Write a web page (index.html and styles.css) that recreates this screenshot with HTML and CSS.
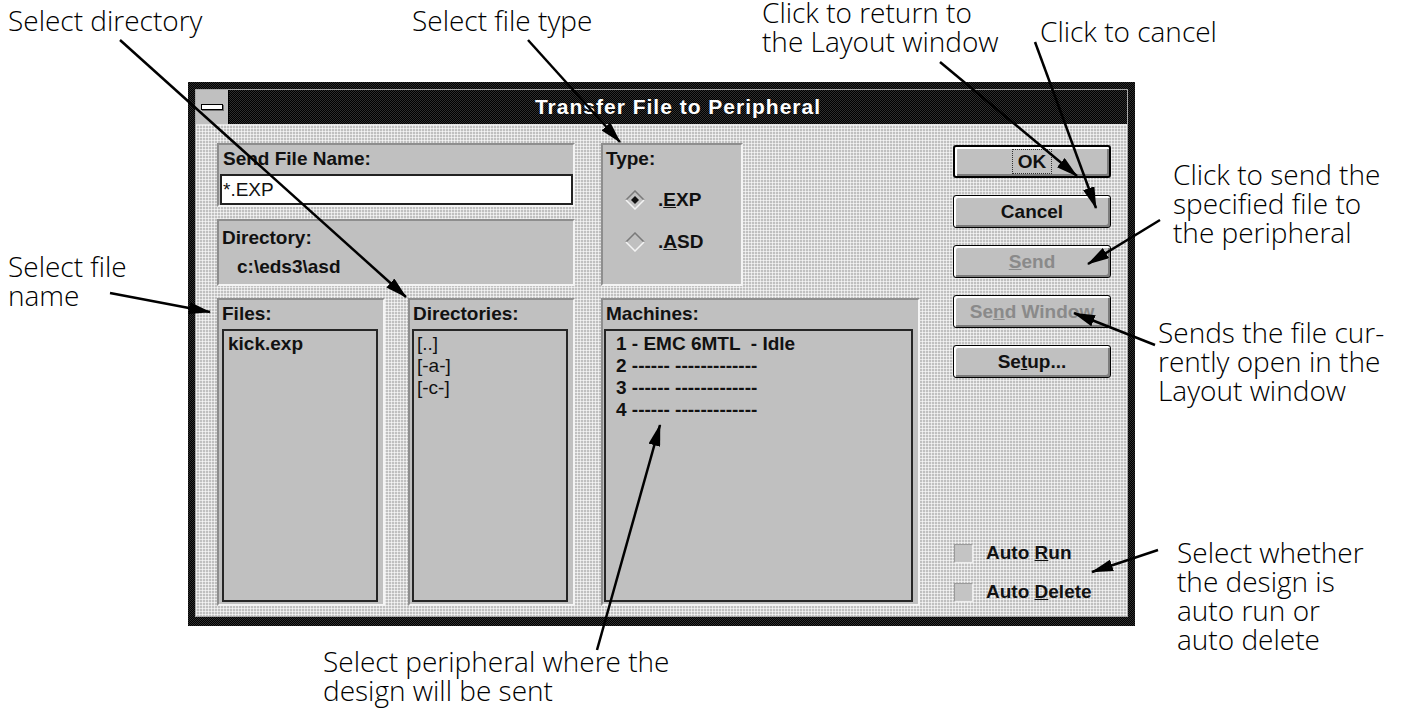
FILE: index.html
```html
<!DOCTYPE html>
<html lang="en">
<head>
    <meta charset="UTF-8">
    <meta name="viewport" content="width=device-width, initial-scale=1.0">
    <title>Transfer File to Peripheral</title>
    <link rel="stylesheet" href="styles.css">
</head>
<body>
<div class="page">

    <div class="window">
        <div class="inner">
            <div class="titlebar">
                <div class="sysbox"><span class="sysbar"></span></div>
                <div class="title">Transfer File to Peripheral</div>
            </div>

            <div class="client">
                <div class="main">
                    <div class="top">
                        <div class="left-col">
                            <div class="group group-name">
                                <div class="label">Send File Name:</div>
                                <div class="input">*.EXP</div>
                            </div>
                            <div class="group group-dir">
                                <div class="label">Directory:</div>
                                <div class="dir-path">c:\eds3\asd</div>
                            </div>
                        </div>
                        <div class="group group-type">
                            <div class="label">Type:</div>
                            <div class="radio radio-first">
                                <svg width="20" height="20" viewBox="0 0 20 20">
                                    <path d="M10 1 L19 10 L10 19 L1 10 Z" fill="#c0c0c0"/>
                                    <path d="M1 10 L10 1 L19 10" fill="none" stroke="#7a7a7a" stroke-width="1.5"/>
                                    <path d="M1 10 L10 19 L19 10" fill="none" stroke="#f4f4f4" stroke-width="1.5"/>
                                    <path d="M10 6 L14 10 L10 14 L6 10 Z" fill="#111"/>
                                </svg>
                                <span>.<u>E</u>XP</span>
                            </div>
                            <div class="radio">
                                <svg width="20" height="20" viewBox="0 0 20 20">
                                    <path d="M10 1 L19 10 L10 19 L1 10 Z" fill="#c0c0c0"/>
                                    <path d="M1 10 L10 1 L19 10" fill="none" stroke="#7a7a7a" stroke-width="1.5"/>
                                    <path d="M1 10 L10 19 L19 10" fill="none" stroke="#f4f4f4" stroke-width="1.5"/>
                                </svg>
                                <span>.<u>A</u>SD</span>
                            </div>
                        </div>
                    </div>

                    <div class="lists">
                        <div class="group group-list group-files">
                            <div class="label">Files:</div>
                            <div class="listbox list-files">
                                <div class="item">kick.exp</div>
                            </div>
                        </div>
                        <div class="group group-list group-dirs">
                            <div class="label">Directories:</div>
                            <div class="listbox list-dirs">
                                <div class="item">[..]</div>
                                <div class="item">[-a-]</div>
                                <div class="item">[-c-]</div>
                            </div>
                        </div>
                        <div class="group group-list group-machines">
                            <div class="label">Machines:</div>
                            <div class="listbox list-machines">
                                <div class="item">1 - EMC 6MTL  - Idle</div>
                                <div class="item">2 ------ -------------</div>
                                <div class="item">3 ------ -------------</div>
                                <div class="item">4 ------ -------------</div>
                            </div>
                        </div>
                    </div>
                </div>

                <div class="buttons">
                    <div class="btn btn-default"><span class="focus">OK</span></div>
                    <div class="btn">Cancel</div>
                    <div class="btn btn-off"><u>S</u>end</div>
                    <div class="btn btn-off">Se<u>n</u>d Window</div>
                    <div class="btn">Se<u>t</u>up...</div>

                    <div class="checks">
                        <div class="check"><span class="check-box"></span><span>Auto <u>R</u>un</span></div>
                        <div class="check"><span class="check-box"></span><span>Auto <u>D</u>elete</span></div>
                    </div>
                </div>
            </div>
        </div>
    </div>

    <!-- callouts round the dialog -->
    <div class="note note-dir">Select directory</div>
    <div class="note note-type">Select file type</div>
    <div class="note note-ok">Click to return to<br>the Layout window</div>
    <div class="note note-cancel">Click to cancel</div>
    <div class="note note-send">Click to send the<br>specified file to<br>the peripheral</div>
    <div class="note note-window">Sends the file cur-<br>rently open in the<br>Layout window</div>
    <div class="note note-auto">Select whether<br>the design is<br>auto run or<br>auto delete</div>
    <div class="note note-file">Select file<br>name</div>
    <div class="note note-machine">Select peripheral where the<br>design will be sent</div>

    <svg class="arrows" width="1409" height="712" viewBox="0 0 1409 712">
        <defs>
            <marker id="head" markerUnits="userSpaceOnUse" markerWidth="22" markerHeight="12" refX="21" refY="6" orient="auto">
                <path d="M0 0 L22 6 L0 12 Z" fill="#000"/>
            </marker>
        </defs>
        <g stroke="#000" stroke-width="2.5" marker-end="url(#head)">
            <line x1="120" y1="40" x2="406" y2="297"/>
            <line x1="528" y1="40" x2="620" y2="142"/>
            <line x1="940" y1="62" x2="1077" y2="176"/>
            <line x1="1035" y1="42" x2="1096" y2="208"/>
            <line x1="1160" y1="220" x2="1088" y2="264"/>
            <line x1="1155" y1="345" x2="1074" y2="313"/>
            <line x1="1158" y1="550" x2="1092" y2="572"/>
            <line x1="110" y1="293" x2="210" y2="312"/>
            <line x1="597" y1="650" x2="660" y2="425"/>
        </g>
    </svg>
</div>
</body>
</html>
```

FILE: styles.css
```css
* {
    box-sizing: border-box;
}

body {
    margin: 0;
    background: #fff;
}

.page {
    position: relative;
    width: 1409px;
    height: 712px;
    overflow: hidden;
    padding: 82px 0 0 188px;
}

/* window frame */
.window {
    width: 947px;
    height: 544px;
    padding: 7px 7px 9px 7px;
    background: #111 repeating-conic-gradient(#000 0 25%, #2e2e2e 0 50%) 0 0/2px 2px;
}

.inner {
    height: 100%;
    border: 1px solid #a8a8a8;
    display: flex;
    flex-direction: column;
}

.titlebar {
    height: 35px;
    display: flex;
    border-bottom: 1px solid #e4e4e4;
    background: #111 repeating-conic-gradient(#000 0 25%, #2e2e2e 0 50%) 0 0/2px 2px;
}

.sysbox {
    width: 33px;
    background: #c0c0c0;
    border-right: 1px solid #000;
    display: flex;
    align-items: center;
    justify-content: center;
}

.sysbar {
    width: 22px;
    height: 6px;
    background: #fff;
    border: 1px solid #000;
    box-shadow: 1px 1px 0 #707070;
}

.title {
    flex: 1;
    text-align: center;
    color: #fff;
    font: bold 21px/33px "Liberation Sans", Arial, sans-serif;
    letter-spacing: 1px;
}

/* dialog body */
.client {
    flex: 1;
    display: flex;
    padding: 18px 16px 10px 21px;
    background-color: #c0c0c0;
    background-image:
        linear-gradient(90deg, rgba(255, 255, 255, .6) 1px, transparent 1px),
        linear-gradient(rgba(255, 255, 255, .6) 1px, transparent 1px);
    background-size: 3px 3px;
    font: bold 19px/22px "Liberation Sans", Arial, sans-serif;
    color: #111;
}

.main {
    width: 703px;
    display: flex;
    flex-direction: column;
}

.top {
    height: 143px;
    display: flex;
    gap: 26px;
}

.left-col {
    width: 358px;
    display: flex;
    flex-direction: column;
    gap: 12px;
}

.group {
    background: #c0c0c0;
    border: 2px solid;
    border-color: #8e8e8e #f4f4f4 #f4f4f4 #8e8e8e;
}

.label {
    padding: 3px 0 0 3px;
}

.group-name {
    height: 64px;
    padding-left: 1px;
}

.input {
    margin-top: 4px;
    height: 31px;
    background: #fff;
    border: 2px solid #222;
    padding-left: 1px;
    font-weight: normal;
    line-height: 27px;
}

.group-dir {
    height: 67px;
}

.group-dir .label {
    padding-top: 6px;
}

.dir-path {
    margin-top: 7px;
    padding-left: 18px;
}

.group-type {
    width: 142px;
}

.radio {
    display: flex;
    align-items: center;
    gap: 13px;
    height: 22px;
    padding-left: 22px;
    margin-top: 20px;
}

.radio-first {
    margin-top: 19px;
}

.radio svg {
    display: block;
}

/* list boxes */
.lists {
    margin-top: 12px;
    height: 308px;
    display: flex;
}

.group-list {
    display: flex;
    flex-direction: column;
}

.group-files {
    width: 168px;
    margin-right: 23px;
}

.group-dirs {
    width: 167px;
    margin-right: 26px;
}

.group-machines {
    width: 319px;
}

.listbox {
    flex: 1;
    margin: 4px 5px 2px 3px;
    border: 2px solid #262626;
    background: #c0c0c0;
    padding-top: 2px;
}

.item {
    white-space: pre;
}

.list-files {
    padding-left: 4px;
}

.list-dirs {
    margin-left: 2px;
    padding-left: 3px;
    font-weight: normal;
}

.list-machines {
    margin-left: 1px;
    padding-left: 10px;
}

/* push buttons */
.buttons {
    width: 158px;
    margin-left: 33px;
    padding: 2px 0 4px;
    display: flex;
    flex-direction: column;
}

.btn {
    height: 33px;
    margin-bottom: 17px;
    border: 1px solid #000;
    border-radius: 3px;
    background: #c0c0c0;
    box-shadow: inset 2px 2px 0 #fff, inset -2px -2px 0 #7c7c7c;
    text-align: center;
    line-height: 31px;
}

.btn-default {
    border-width: 2px;
    line-height: 29px;
}

.focus {
    outline: 1px dotted #333;
    outline-offset: 1px;
    padding: 0 4px;
}

.btn-off {
    color: #8a8a8a;
}

.checks {
    margin-top: auto;
    display: flex;
    flex-direction: column;
    gap: 19px;
}

.check {
    display: flex;
    align-items: center;
    gap: 13px;
    height: 20px;
    padding-left: 1px;
}

.check-box {
    width: 19px;
    height: 19px;
    background: #c4c4c4;
    border: 1px solid;
    border-color: #9a9a9a #ececec #ececec #9a9a9a;
}

/* callouts */
.note {
    position: absolute;
    font: 300 28px/29px "Open Sans", "Noto Sans", sans-serif;
    color: #000;
    white-space: nowrap;
}

.note-dir { left: 8px; top: 6px; }
.note-type { left: 412px; top: 6px; }
.note-ok { left: 762px; top: -2px; }
.note-cancel { left: 1040px; top: 17px; }
.note-send { left: 1173px; top: 160px; }
.note-window { left: 1158px; top: 318px; }
.note-auto { left: 1177px; top: 538px; }
.note-file { left: 8px; top: 252px; }
.note-machine { left: 323px; top: 647px; }

.arrows {
    position: absolute;
    left: 0;
    top: 0;
    pointer-events: none;
}
```
